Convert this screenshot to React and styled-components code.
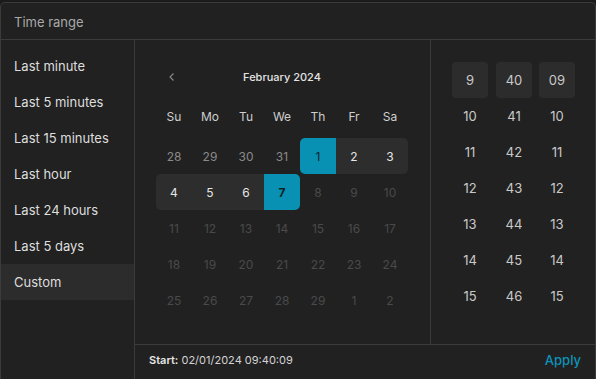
import styled, { createGlobalStyle, css } from "styled-components";

const GlobalStyle = createGlobalStyle`
  html, body {
    margin: 0;
    padding: 0;
    background: #1b1b1b;
    font-family: Inter, "Noto Sans", sans-serif;
  }
  * { box-sizing: border-box; }
`;

const ranges = ["Last minute", "Last 5 minutes", "Last 15 minutes", "Last hour", "Last 24 hours", "Last 5 days", "Custom"];
const weekdays = ["Su", "Mo", "Tu", "We", "Th", "Fr", "Sa"];

// kind: out = other month, on = this month, off = disabled
const weeks = [
  [
    { d: 28, kind: "out" }, { d: 29, kind: "out" }, { d: 30, kind: "out" }, { d: 31, kind: "out" },
    { d: 1, kind: "on", sel: true, left: true }, { d: 2, kind: "on", range: true }, { d: 3, kind: "on", range: true, right: true },
  ],
  [
    { d: 4, kind: "on", range: true, left: true }, { d: 5, kind: "on", range: true }, { d: 6, kind: "on", range: true },
    { d: 7, kind: "on", sel: true, right: true, bold: true },
    { d: 8, kind: "off" }, { d: 9, kind: "off" }, { d: 10, kind: "off" },
  ],
  [11, 12, 13, 14, 15, 16, 17].map((d) => ({ d, kind: "off" })),
  [18, 19, 20, 21, 22, 23, 24].map((d) => ({ d, kind: "off" })),
  [25, 26, 27, 28, 29, 1, 2].map((d) => ({ d, kind: "off" })),
];

const hours = ["9", "10", "11", "12", "13", "14", "15"];
const minutes = ["40", "41", "42", "43", "44", "45", "46"];
const seconds = ["09", "10", "11", "12", "13", "14", "15"];

export default function App() {
  return (
    <>
      <GlobalStyle />
      <Panel>
        <Header>Time range</Header>
        <Body>
          <Sidebar>
            {ranges.map((r) => (
              <RangeItem key={r} $active={r === "Custom"}>{r}</RangeItem>
            ))}
          </Sidebar>
          <Main>
            <Pickers>
              <Calendar>
                <Nav>
                  <PrevButton>
                    <svg width="10" height="10" viewBox="0 0 10 10" fill="none">
                      <path d="M6.5 1.5 L3 5 L6.5 8.5" stroke="#8a8a8a" strokeWidth="1.1" />
                    </svg>
                  </PrevButton>
                  <Month>February 2024</Month>
                </Nav>
                <DayGrid>
                  {weekdays.map((w) => (
                    <Weekday key={w}>{w}</Weekday>
                  ))}
                </DayGrid>
                <Weeks>
                  {weeks.map((week, i) => (
                    <DayGrid key={i}>
                      {week.map((c, j) => (
                        <Day
                          key={j}
                          $kind={c.kind}
                          $sel={c.sel}
                          $range={c.range}
                          $left={c.left}
                          $right={c.right}
                          $bold={c.bold}
                        >
                          {c.d}
                        </Day>
                      ))}
                    </DayGrid>
                  ))}
                </Weeks>
              </Calendar>
              <TimePanel>
                {[hours, minutes, seconds].map((col, i) => (
                  <TimeColumn key={i}>
                    {col.map((v, k) => (
                      <TimeCell key={v} $sel={k === 0}>{v}</TimeCell>
                    ))}
                  </TimeColumn>
                ))}
              </TimePanel>
            </Pickers>
            <Footer>
              <Summary><b>Start:</b> 02/01/2024 09:40:09</Summary>
              <ApplyButton>Apply</ApplyButton>
            </Footer>
          </Main>
        </Body>
      </Panel>
    </>
  );
}

const Panel = styled.div`
  margin-top: 2px;
  width: 596px;
  height: 377px;
  background: #212121;
  border: 1px solid #3b3b3b;
  border-bottom: none;
  border-radius: 5px 5px 0 0;
  display: flex;
  flex-direction: column;
  overflow: hidden;
`;

const Header = styled.div`
  height: 37px;
  flex: none;
  display: flex;
  align-items: center;
  padding: 2px 0 0 13px;
  font-size: 13px;
  color: #a9a9a9;
  border-bottom: 1px solid #3b3b3b;
`;

const Body = styled.div`
  flex: 1;
  display: grid;
  grid-template-columns: 134px 1fr;
`;

const Sidebar = styled.div`
  border-right: 1px solid #3b3b3b;
  padding-top: 8px;
  display: flex;
  flex-direction: column;
`;

const RangeItem = styled.div`
  height: 36px;
  display: flex;
  align-items: center;
  padding: 0 0 1px 13px;
  font-size: 13px;
  color: #dedede;
  background: ${(p) => (p.$active ? "#2c2c2c" : "transparent")};
`;

const Main = styled.div`
  display: flex;
  flex-direction: column;
`;

const Pickers = styled.div`
  height: 305px;
  display: flex;
  border-bottom: 1px solid #3b3b3b;
`;

const Calendar = styled.div`
  width: 295px;
  padding: 22px 0 0 21px;
`;

const Nav = styled.div`
  width: 252px;
  height: 30px;
  display: flex;
  align-items: center;
  justify-content: center;
  position: relative;
`;

const PrevButton = styled.div`
  position: absolute;
  left: 11px;
  top: 10px;
  width: 10px;
  height: 10px;
  display: flex;
`;

const Month = styled.div`
  font-size: 11px;
  font-weight: 500;
  color: #e4e4e4;
`;

const DayGrid = styled.div`
  display: grid;
  grid-template-columns: repeat(7, 36px);
`;

const Weekday = styled.div`
  height: 36px;
  margin-top: 6px;
  display: flex;
  align-items: center;
  justify-content: center;
  font-size: 12px;
  color: #cfcfcf;
`;

const Weeks = styled.div`
  margin-top: 4px;
`;

const dayColors = { on: "#e6e6e6", out: "#8a8a8a", off: "#4a4a4a" };

const Day = styled.div`
  height: 36px;
  display: flex;
  align-items: center;
  justify-content: center;
  font-size: 12px;
  color: ${(p) => dayColors[p.$kind]};
  font-weight: ${(p) => (p.$bold ? 700 : 400)};
  ${(p) => p.$range && css`background: #2d2d2d;`}
  ${(p) => p.$sel && css`background: #0891b2; color: #10242a;`}
  ${(p) => p.$left && css`border-top-left-radius: 5px; border-bottom-left-radius: 5px;`}
  ${(p) => p.$right && css`border-top-right-radius: 5px; border-bottom-right-radius: 5px;`}
`;

const TimePanel = styled.div`
  flex: 1;
  border-left: 1px solid #3b3b3b;
  padding: 22px 0 0 21px;
  display: flex;
  gap: 8px;
`;

const TimeColumn = styled.div`
  width: 36px;
  display: flex;
  flex-direction: column;
  &:last-child { margin-left: -1px; }
`;

const TimeCell = styled.div`
  height: 36px;
  display: flex;
  align-items: center;
  justify-content: center;
  font-size: 13px;
  color: #c9c9c9;
  border-radius: 4px;
  background: ${(p) => (p.$sel ? "#2c2c2c" : "transparent")};
`;

const Footer = styled.div`
  height: 29px;
  display: flex;
  align-items: center;
  justify-content: space-between;
  padding: 0 14px;
`;

const Summary = styled.div`
  font-size: 11px;
  color: #d4d4d4;
  b { font-weight: 600; color: #e6e6e6; }
`;

const ApplyButton = styled.div`
  font-size: 13px;
  font-weight: 500;
  color: #0e93b8;
`;
